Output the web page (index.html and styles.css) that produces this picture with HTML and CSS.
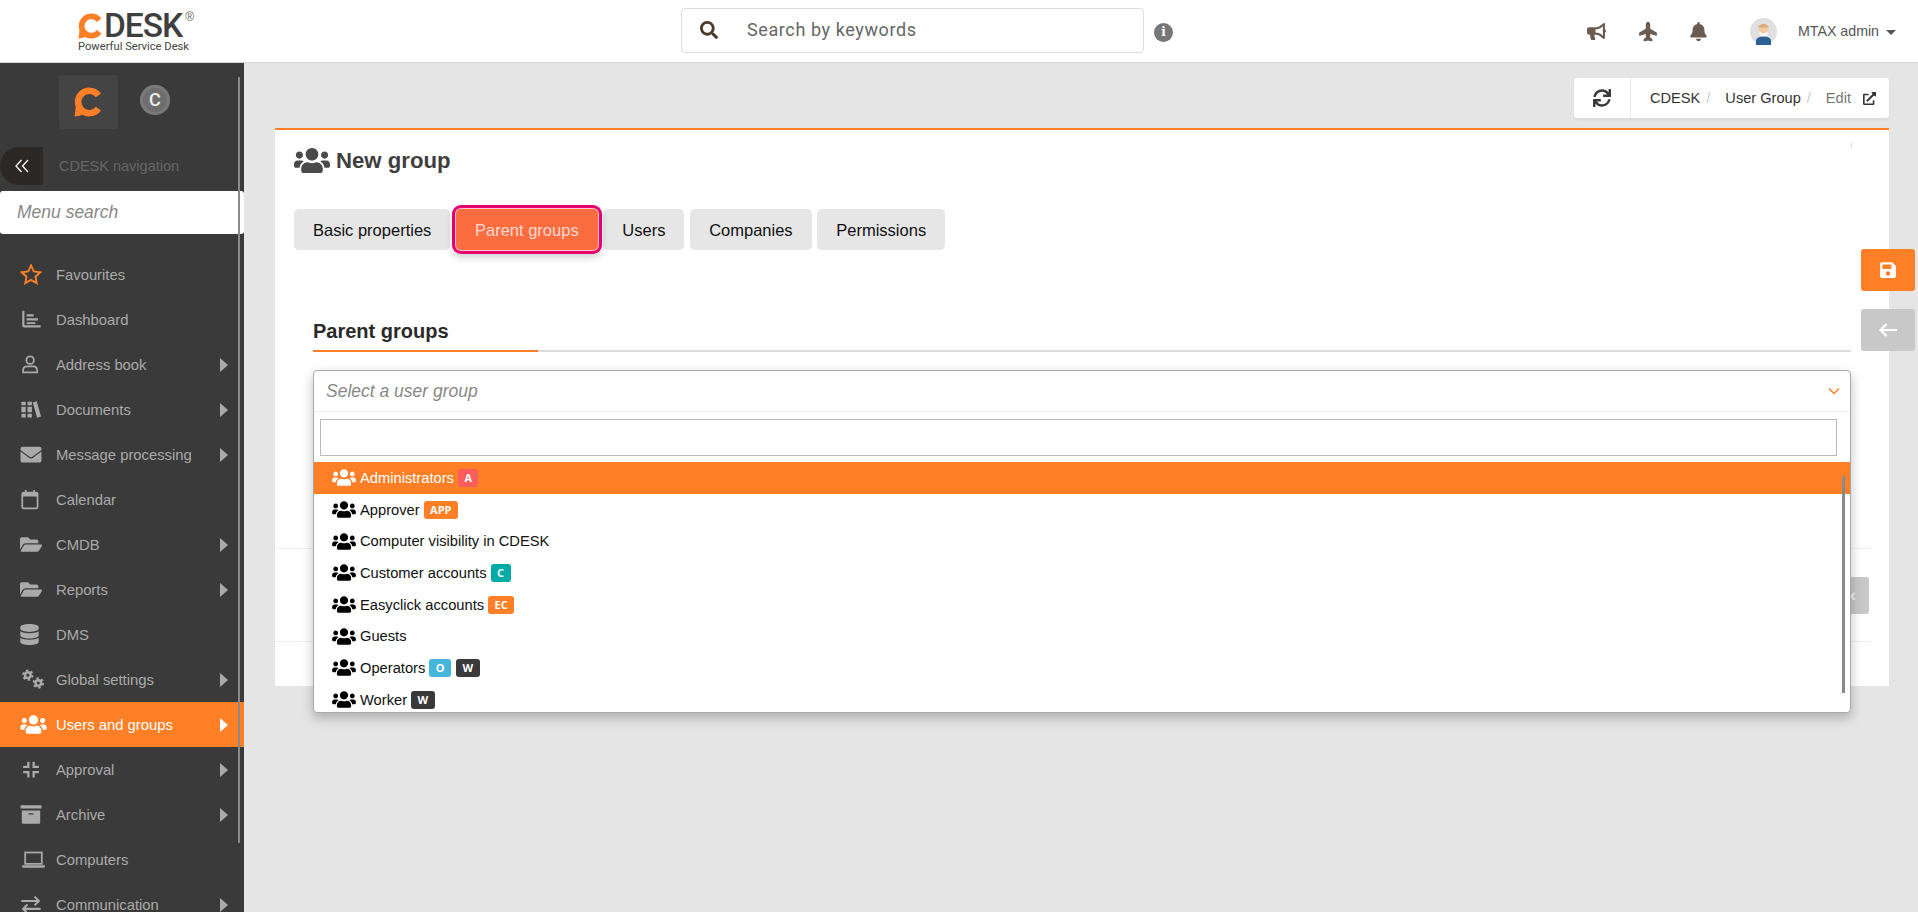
FILE: index.html
```html
<!DOCTYPE html>
<html lang="en">
<head>
  <meta charset="UTF-8" />
  <title>CDESK - New group</title>
  <link rel="stylesheet" href="styles.css">
</head>
<body>
  <svg class="sprites" width="0" height="0">
    <symbol id="i-users" viewBox="0 0 640 512"><path d="M96 224c35.3 0 64-28.7 64-64s-28.7-64-64-64-64 28.7-64 64 28.7 64 64 64zm448 0c35.3 0 64-28.7 64-64s-28.7-64-64-64-64 28.7-64 64 28.7 64 64 64zm32 32h-64c-17.6 0-33.5 7.1-45.1 18.6 40.3 22.1 68.9 62 75.1 109.4h66c17.7 0 32-14.3 32-32v-32c0-35.3-28.7-64-64-64zm-256 0c61.9 0 112-50.1 112-112S381.9 32 320 32 208 82.1 208 144s50.1 112 112 112zm76.8 32h-8.3c-20.8 10-43.9 16-68.5 16s-47.6-6-68.5-16h-8.3C179.6 288 128 339.6 128 403.2V432c0 26.5 21.5 48 48 48h288c26.5 0 48-21.5 48-48v-28.8c0-63.6-51.6-115.2-115.2-115.2zm-223.7-13.4C161.5 263.1 145.6 256 128 256H64c-35.3 0-64 28.7-64 64v32c0 17.7 14.3 32 32 32h65.9c6.3-47.4 34.9-87.3 75.2-109.4z"/></symbol>
    <symbol id="i-folder" viewBox="0 0 576 512"><path d="M572.694 292.093L500.27 416.248A63.997 63.997 0 0 1 444.989 448H45.025c-18.523 0-30.064-20.093-20.731-36.093l72.424-124.155A64 64 0 0 1 152 256h399.964c18.523 0 30.064 20.093 20.73 36.093zM152 224h328v-48c0-26.51-21.49-48-48-48H272l-64-64H48C21.49 64 0 85.49 0 112v278.046l69.077-118.418C86.214 242.25 117.989 224 152 224z"/></symbol>
    <symbol id="i-cdesk-c" viewBox="0 0 30 30"><path d="M24.4 8.4A11.2 11.2 0 1 0 24.4 21.600" fill="none" stroke="#ff7f27" stroke-width="6.500"/><path d="M0.500 29.500L1.800 20L9.500 27.500Q4 29.500 0.500 29.500z" fill="#ff7f27"/></symbol>
  </svg>

  <header class="topbar">
    <div class="logo">
      <div class="logo-main">
        <svg class="logo-c"><use href="#i-cdesk-c"/></svg>
        <span class="logo-name">DESK</span><span class="logo-reg">®</span>
      </div>
      <div class="logo-sub">Powerful Service Desk</div>
    </div>
    <div class="search">
      <svg class="search-icon" viewBox="0 0 512 512"><path d="M505 442.7L405.3 343c-4.5-4.5-10.6-7-17-7H372c27.6-35.3 44-79.7 44-128C416 93.1 322.9 0 208 0S0 93.1 0 208s93.1 208 208 208c48.3 0 92.7-16.4 128-44v16.3c0 6.4 2.5 12.5 7 17l99.7 99.7c9.4 9.4 24.6 9.4 33.9 0l28.3-28.3c9.4-9.4 9.4-24.6.1-34zM208 336c-70.7 0-128-57.2-128-128 0-70.7 57.2-128 128-128 70.7 0 128 57.2 128 128 0 70.7-57.2 128-128 128z"/></svg>
      <span>Search by keywords</span>
    </div>
    <div class="info">i</div>
    <div class="top-actions">
      <svg class="top-icon bullhorn" viewBox="0 0 576 512"><path d="M576 240c0-23.63-12.95-44.04-32-55.12V32.01C544 23.26 537.02 0 512 0c-7.12 0-14.19 2.38-19.98 7.02l-85.03 68.03C364.28 109.19 310.66 128 256 128H64c-35.35 0-64 28.65-64 64v96c0 35.35 28.65 64 64 64h33.7c-1.39 10.48-2.18 21.14-2.18 32 0 39.77 9.26 77.35 25.56 110.94 5.19 10.69 16.52 17.06 28.4 17.06h74.28c26.05 0 41.69-29.84 25.9-50.56-16.4-21.52-26.15-48.36-26.15-77.44 0-11.11 1.62-21.79 4.41-32H256c54.66 0 108.28 18.81 150.98 52.95l85.03 68.03a32.023 32.023 0 0 0 19.98 7.02c24.92 0 32-22.78 32-32V295.13C563.05 284.04 576 263.63 576 240zm-96 141.42l-33.05-26.44C392.95 311.78 325.12 288 256 288v-96c69.12 0 136.95-23.78 190.95-66.98L480 98.58v282.84z"/></svg>
      <svg class="top-icon plane" viewBox="0 0 576 512"><path d="M480 192H365.71L260.61 8.06A16.014 16.014 0 0 0 246.71 0h-65.5c-10.63 0-18.3 10.17-15.38 20.39L214.86 192H112l-43.2-57.6c-3.02-4.03-7.77-6.4-12.8-6.4H16.01C5.6 128-2.04 137.78.49 147.88L32 256 .49 364.12C-2.04 374.22 5.6 384 16.01 384H56c5.04 0 9.78-2.37 12.8-6.4L112 320h102.86l-49.03 171.6c-2.92 10.22 4.75 20.4 15.38 20.4h65.5c5.74 0 11.04-3.08 13.89-8.06L365.71 320H480c35.35 0 96-28.65 96-64s-60.65-64-96-64z"/></svg>
      <svg class="top-icon bell" viewBox="0 0 448 512"><path d="M224 512c35.32 0 63.97-28.65 63.97-64H160.03c0 35.35 28.65 64 63.97 64zm215.39-149.71c-19.32-20.76-55.47-51.99-55.47-154.29 0-77.7-54.48-139.9-127.94-155.16V32c0-17.67-14.32-32-31.98-32s-31.98 14.33-31.98 32v20.84C118.56 68.1 64.08 130.3 64.08 208c0 102.3-36.15 133.53-55.47 154.29-6 6.45-8.66 14.16-8.61 21.71.11 16.4 12.98 32 32.1 32h383.8c19.12 0 32-15.6 32.1-32 .05-7.55-2.61-15.27-8.61-21.71z"/></svg>
      <svg class="avatar" viewBox="0 0 27 27"><circle cx="13.5" cy="13.5" r="13.5" fill="#e0e0e2"/><circle cx="13.5" cy="11" r="5" fill="#f3c9a0"/><path d="M8 8.5q5.500-5 11 0l-1 1h-9z" fill="#d9a878"/><path d="M9.500 13q4 5 8 0v3l-2 2.500h-4l-2-2.500z" fill="#fff"/><path d="M6 27v-4q0-4.500 7.500-4.500t7.500 4.500v4z" fill="#2d6194"/></svg>
      <span class="user-name">MTAX admin</span>
      <span class="caret"></span>
    </div>
  </header>

  <div class="layout">
    <aside class="sidebar">
      <div class="side-scroll"></div>
      <div class="brand-row">
        <div class="brand-tile">
          <svg><use href="#i-cdesk-c"/></svg>
        </div>
        <div class="brand-alt">C</div>
      </div>
      <div class="nav-head">
        <div class="collapse">
          <svg viewBox="0 0 14 14"><path d="M6.500 1L1 7l5.500 6M13 1L7.500 7l5.500 6" fill="none" stroke="#fff" stroke-width="1.300"/></svg>
        </div>
        <span>CDESK navigation</span>
      </div>
      <div class="menu-search">Menu search</div>
      <nav class="menu">
        <a class="menu-item">
          <svg class="menu-icon" viewBox="1 1 22 22"><path d="M12 2.500l2.900 6.300 6.800.8-5 4.700 1.300 6.800-6-3.400-6 3.400 1.300-6.800-5-4.700 6.800-.8z" fill="none" stroke="#ff7f27" stroke-width="2"/></svg>
          Favourites
        </a>
        <a class="menu-item">
          <svg class="menu-icon" viewBox="0 0 24 24"><path d="M2 2v17q0 2 2 2h19v-2.500H4.500V2z"/><path d="M7 6h8v2.500H7zM7 10.500h13V13H7zM7 15h10v2H7z"/></svg>
          Dashboard
        </a>
        <a class="menu-item has-sub">
          <svg class="menu-icon" viewBox="0 0 24 24"><circle cx="11" cy="7" r="4.300" fill="none" stroke="#aaa" stroke-width="2"/><path d="M3 21v-2.500q0-4.500 4.500-4.500h7q4.500 0 4.500 4.500V21z" fill="none" stroke="#aaa" stroke-width="2"/></svg>
          Address book
        </a>
        <a class="menu-item has-sub">
          <svg class="menu-icon" viewBox="0 0 24 24"><path d="M1 3h5v18H1zM8 3h5v18H8zM14 4l4.500-1.500 5 17.500-4.500 1.500z"/><path d="M0 8h14M0 16h14" stroke="#3a3a3a" stroke-width="1.500"/></svg>
          Documents
        </a>
        <a class="menu-item has-sub">
          <svg class="menu-icon" viewBox="0 0 512 512"><path d="M502.3 190.8c3.900-3.100 9.700-.2 9.700 4.700V400c0 26.500-21.500 48-48 48H48c-26.500 0-48-21.500-48-48V195.600c0-5 5.700-7.800 9.700-4.700 22.400 17.400 52.100 39.500 154.100 113.600 21.100 15.400 56.700 47.800 92.200 47.600 35.700.3 72-32.800 92.300-47.600 102-74.100 131.600-96.300 154-113.700zM256 320c23.200.4 56.600-29.200 73.400-41.400 132.700-96.300 142.800-104.700 173.400-128.700 5.800-4.500 9.200-11.500 9.200-18.900v-19c0-26.500-21.500-48-48-48H48C21.500 64 0 85.500 0 112v19c0 7.400 3.400 14.300 9.200 18.900 30.600 23.900 40.700 32.400 173.400 128.700 16.800 12.200 50.200 41.800 73.400 41.400z"/></svg>
          Message processing
        </a>
        <a class="menu-item">
          <svg class="menu-icon" viewBox="0 0 24 24"><rect x="2" y="4" width="17.500" height="18" rx="1.500" fill="none" stroke="#aaa" stroke-width="2"/><path d="M2 4h17.500v4.500H2zM5 1h2v4H5zM14.500 1h2v4h-2z"/></svg>
          Calendar
        </a>
        <a class="menu-item has-sub">
          <svg class="menu-icon"><use href="#i-folder"/></svg>
          CMDB
        </a>
        <a class="menu-item has-sub">
          <svg class="menu-icon"><use href="#i-folder"/></svg>
          Reports
        </a>
        <a class="menu-item">
          <svg class="menu-icon db" viewBox="0 0 448 512"><path d="M448 73.143v45.714C448 159.143 347.667 192 224 192S0 159.143 0 118.857V73.143C0 32.857 100.333 0 224 0s224 32.857 224 73.143zM448 176v102.857C448 319.143 347.667 352 224 352S0 319.143 0 278.857V176c48.125 33.143 136.208 48.572 224 48.572S399.874 209.143 448 176zm0 160v102.857C448 479.143 347.667 512 224 512S0 479.143 0 438.857V336c48.125 33.143 136.208 48.572 224 48.572S399.874 369.143 448 336z"/></svg>
          DMS
        </a>
        <a class="menu-item has-sub">
          <svg class="menu-icon cogs" viewBox="0 0 27 24"><g fill="none" stroke="#aaa"><circle cx="7" cy="7" r="3.200" stroke-width="2.800"/><circle cx="7" cy="7" r="5.400" stroke-width="2.200" stroke-dasharray="2.700 2.950"/><circle cx="19" cy="16" r="3.200" stroke-width="2.800"/><circle cx="19" cy="16" r="5.400" stroke-width="2.200" stroke-dasharray="2.700 2.950"/></g></svg>
          Global settings
        </a>
        <a class="menu-item has-sub active">
          <svg class="menu-icon users"><use href="#i-users"/></svg>
          Users and groups
        </a>
        <a class="menu-item has-sub">
          <svg class="menu-icon" viewBox="0 0 24 24"><path d="M9 3v6H3M15 3v6h6M9 21v-6H3M15 21v-6h6" fill="none" stroke="#aaa" stroke-width="2.600"/></svg>
          Approval
        </a>
        <a class="menu-item has-sub">
          <svg class="menu-icon" viewBox="0 0 512 512"><path d="M32 448c0 17.700 14.300 32 32 32h384c17.700 0 32-14.300 32-32V160H32v288zm160-212c0-6.600 5.400-12 12-12h104c6.600 0 12 5.400 12 12v8c0 6.600-5.400 12-12 12H204c-6.600 0-12-5.400-12-12v-8zM496 32H16C7.200 32 0 39.200 0 48v48c0 8.800 7.200 16 16 16h480c8.800 0 16-7.200 16-16V48c0-8.800-7.200-16-16-16z"/></svg>
          Archive
        </a>
        <a class="menu-item">
          <svg class="menu-icon wide" viewBox="0 0 26 24"><rect x="3.500" y="4" width="19" height="13" fill="none" stroke="#aaa" stroke-width="2"/><path d="M0 18.500h26V20q0 1.500-1.500 1.500h-23Q0 21.500 0 20z"/></svg>
          Computers
        </a>
        <a class="menu-item has-sub">
          <svg class="menu-icon" viewBox="0 0 24 24"><path d="M1 8h20M16 3l5 5-5 5M23 17H3M8 12l-5 5 5 5" fill="none" stroke="#aaa" stroke-width="2.400"/></svg>
          Communication
        </a>
      </nav>
    </aside>

    <main class="content">
      <div class="crumbs">
        <div class="crumb-refresh">
          <svg viewBox="0 0 512 512"><path d="M440.65 12.57l4 82.77A247.16 247.16 0 0 0 255.83 8C134.73 8 33.91 94.92 12.29 209.82A12 12 0 0 0 24.09 224h49.05a12 12 0 0 0 11.67-9.26 175.91 175.91 0 0 1 317-56.94l-101.46-4.86a12 12 0 0 0-12.57 12v47.41a12 12 0 0 0 12 12H500a12 12 0 0 0 12-12V12a12 12 0 0 0-12-12h-47.37a12 12 0 0 0-11.98 12.57zM255.83 432a175.61 175.61 0 0 1-146-77.8l101.8 4.87a12 12 0 0 0 12.57-12v-47.4a12 12 0 0 0-12-12H12a12 12 0 0 0-12 12V500a12 12 0 0 0 12 12h47.35a12 12 0 0 0 12-12.6l-4.15-82.57A247.17 247.17 0 0 0 255.83 504c121.11 0 221.93-86.92 243.55-201.82a12 12 0 0 0-11.8-14.18h-49.05a12 12 0 0 0-11.67 9.26A175.86 175.86 0 0 1 255.83 432z"/></svg>
        </div>
        <div class="crumb-path">
          <span>CDESK</span><i>/</i>
          <span>User Group</span><i>/</i>
          <span class="crumb-now">Edit</span>
          <svg class="crumb-link" viewBox="0 0 512 512"><path d="M432,320H400a16,16,0,0,0-16,16V448H64V128H208a16,16,0,0,0,16-16V80a16,16,0,0,0-16-16H48A48,48,0,0,0,0,112V464a48,48,0,0,0,48,48H400a48,48,0,0,0,48-48V336A16,16,0,0,0,432,320ZM488,0h-128c-21.370,0-32.050,25.910-17,41l35.730,35.730L135,320.370a24,24,0,0,0,0,34L157.670,377a24,24,0,0,0,34,0L435.280,133.320,471,169c15,15,41,4.500,41-17V24A24,24,0,0,0,488,0Z"/></svg>
        </div>
      </div>

      <section class="card">
        <span class="card-tick"></span>
        <h1 class="card-title">
          <svg class="title-icon"><use href="#i-users"/></svg>
          New group
        </h1>
        <div class="tabs">
          <button class="tab">Basic properties</button>
          <button class="tab tab-active">Parent groups</button>
          <button class="tab">Users</button>
          <button class="tab">Companies</button>
          <button class="tab">Permissions</button>
        </div>

        <div class="panel">
          <h2 class="panel-title">Parent groups</h2>
          <div class="select">
            <div class="select-box">
              <div class="select-head">
                <span>Select a user group</span>
                <svg viewBox="0 0 12 8"><path d="M1 1.500l5 5 5-5" fill="none" stroke="#ff7f27" stroke-width="1.500"/></svg>
              </div>
              <div class="select-filter"><div class="filter-input"></div></div>
              <ul class="options">
                <li class="option selected"><svg><use href="#i-users"/></svg>Administrators <b class="badge red">A</b></li>
                <li class="option"><svg><use href="#i-users"/></svg>Approver <b class="badge orange">APP</b></li>
                <li class="option"><svg><use href="#i-users"/></svg>Computer visibility in CDESK</li>
                <li class="option"><svg><use href="#i-users"/></svg>Customer accounts <b class="badge teal">C</b></li>
                <li class="option"><svg><use href="#i-users"/></svg>Easyclick accounts <b class="badge orange">EC</b></li>
                <li class="option"><svg><use href="#i-users"/></svg>Guests</li>
                <li class="option"><svg><use href="#i-users"/></svg>Operators <b class="badge blue">O</b> <b class="badge dark">W</b></li>
                <li class="option"><svg><use href="#i-users"/></svg>Worker <b class="badge dark">W</b></li>
              </ul>
              <div class="options-scroll"></div>
            </div>
          </div>
        </div>

        <div class="under-row">
          <div class="under-btn">‹</div>
        </div>
      </section>

      <button class="float-btn save">
        <svg viewBox="0 0 448 512"><path d="M433.941 129.941l-83.882-83.882A48 48 0 0 0 316.118 32H48C21.490 32 0 53.490 0 80v352c0 26.510 21.490 48 48 48h352c26.510 0 48-21.490 48-48V163.882a48 48 0 0 0-14.059-33.941zM224 416c-35.346 0-64-28.654-64-64 0-35.346 28.654-64 64-64s64 28.654 64 64c0 35.346-28.654 64-64 64zm96-304.520V212c0 6.627-5.373 12-12 12H76c-6.627 0-12-5.373-12-12V108c0-6.627 5.373-12 12-12h228.520c3.183 0 6.235 1.264 8.485 3.515l3.480 3.480A11.996 11.996 0 0 1 320 111.480z"/></svg>
      </button>
      <button class="float-btn back">
        <svg viewBox="0 0 20 16"><path d="M19 8H3M8.500 2L2.500 8l6 6" fill="none" stroke="#fff" stroke-width="2.200"/></svg>
      </button>
    </main>
  </div>
</body>
</html>
```

FILE: styles.css
```css
/* General */
* {
  box-sizing: border-box;
}
html, body {
  height: 100%;
}
body {
  margin: 0;
  background-color: #e5e5e5;
  color: #3a3a3a;
  font-family: 'Liberation Sans', Arial, sans-serif;
  overflow: hidden;
}
.sprites {
  position: absolute;
}

/* Top bar */
.topbar {
  display: flex;
  align-items: center;
  height: 63px;
  background-color: #fff;
  border-bottom: 1px solid #d8d8d8;
}
.logo {
  align-self: flex-start;
  width: 681px;
  padding: 13px 0 0 78px;
}
.logo-main {
  display: flex;
  align-items: flex-start;
  height: 27px;
}
.logo-c {
  width: 26px;
  height: 26px;
}
.logo-name {
  font-family: 'Roboto', sans-serif;
  font-size: 33.5px;
  font-weight: 500;
  line-height: 25px;
  letter-spacing: -1px;
  color: #3f3f3f;
}
.logo-reg {
  margin-left: 3px;
  font-size: 12px;
  line-height: 9px;
  color: #666;
}
.logo-sub {
  font-family: 'Roboto', sans-serif;
  font-size: 11.2px;
  line-height: 14px;
  color: #444;
}
.search {
  display: flex;
  align-items: center;
  width: 463px;
  height: 45px;
  margin-top: -1px;
  padding: 0 0 2px 18px;
  border: 1px solid #ddd;
  border-radius: 4px;
  font-family: 'Roboto', sans-serif;
  font-size: 18px;
  letter-spacing: 0.6px;
  color: #666;
}
.search-icon {
  width: 18px;
  height: 18px;
  fill: #4b3b2b;
  margin-right: 29px;
}
.info {
  width: 19px;
  height: 19px;
  margin: 2px 0 0 10px;
  border-radius: 50%;
  background-color: #777;
  color: #fff;
  font-family: 'DejaVu Serif', serif;
  font-size: 12px;
  font-weight: bold;
  line-height: 19px;
  text-align: center;
}
.top-actions {
  display: flex;
  align-items: center;
  margin-left: auto;
  padding-right: 22px;
}
.top-icon {
  height: 19px;
  fill: #6b5c50;
}
.bullhorn {
  width: 19px;
}
.plane {
  width: 20px;
  margin-left: 32px;
  transform: rotate(-90deg);
}
.bell {
  width: 17px;
  margin-left: 32px;
}
.avatar {
  width: 27px;
  height: 27px;
  margin-left: 43.5px;
}
.user-name {
  margin-left: 21px;
  font-size: 14.2px;
  color: #555;
}
.caret {
  width: 0;
  height: 0;
  margin: 3px 0 0 7px;
  border-left: 5px solid transparent;
  border-right: 5px solid transparent;
  border-top: 5px solid #555;
}

/* Page layout */
.layout {
  display: flex;
  height: calc(100% - 63px);
}

/* Sidebar */
.sidebar {
  position: relative;
  flex: none;
  width: 244px;
  overflow: hidden;
  padding-top: 12px;
  background-color: #3a3a3a;
}
.side-scroll {
  position: absolute;
  top: 14px;
  left: 238px;
  width: 2px;
  height: 766px;
  background-color: #8a8a8a;
  z-index: 2;
}
.brand-row {
  display: flex;
  align-items: flex-start;
  padding-left: 59px;
}
.brand-tile {
  display: flex;
  align-items: center;
  justify-content: center;
  width: 59px;
  height: 54px;
  border-radius: 3px;
  background-color: #444;
}
.brand-tile svg {
  width: 30px;
  height: 30px;
  margin-top: -1px;
}
.brand-alt {
  width: 30px;
  height: 30px;
  margin: 10px 0 0 22px;
  border-radius: 50%;
  background-color: #6e6e6e;
  box-shadow: inset 0 0 0 3px #7a7a7a;
  color: #eee;
  font-family: 'Roboto', sans-serif;
  font-size: 18px;
  font-weight: 500;
  line-height: 30px;
  text-align: center;
}
.nav-head {
  display: flex;
  align-items: center;
  height: 38px;
  margin-top: 18px;
  font-size: 14.5px;
  color: #666;
}
.collapse {
  display: flex;
  align-items: center;
  justify-content: center;
  width: 43px;
  height: 38px;
  margin-right: 16px;
  border-radius: 19px 0 0 19px;
  background-color: #2b2825;
}
.collapse svg {
  width: 14px;
  height: 14px;
}
.menu-search {
  height: 43px;
  margin-top: 6px;
  padding-left: 17px;
  border-radius: 3px;
  background-color: #fff;
  font-size: 17.5px;
  font-style: italic;
  line-height: 43px;
  color: #888;
}
.menu {
  padding-top: 18px;
}
.menu-item {
  position: relative;
  display: flex;
  align-items: center;
  height: 45px;
  padding-left: 20px;
  font-size: 14.8px;
  color: #aaa;
}
.menu-icon {
  flex: none;
  width: 22px;
  height: 21px;
  margin-right: 14px;
  fill: #aaa;
}
.menu-icon.db {
  width: 19px;
  margin-right: 17px;
}
.menu-icon.cogs,
.menu-icon.users,
.menu-icon.wide {
  width: 27px;
  margin-right: 9px;
}
.has-sub::after {
  content: "";
  position: absolute;
  top: 16px;
  left: 220px;
  border-top: 7px solid transparent;
  border-bottom: 7px solid transparent;
  border-left: 8px solid #aaa;
}
.menu-item.active {
  background-color: #ff7f27;
  color: #fff;
}
.menu-item.active .menu-icon {
  fill: #fff;
}
.menu-item.active::after {
  border-left-color: #fff;
}

/* Content */
.content {
  position: relative;
  flex: 1;
  min-width: 0;
  padding: 15px 29px 0 31px;
}
.crumbs {
  display: flex;
  width: 315px;
  height: 40px;
  margin: 0 0 10px auto;
  border-radius: 3px;
  background-color: #fff;
  box-shadow: 0 2px 3px rgba(0, 0, 0, 0.06);
}
.crumb-refresh {
  display: flex;
  align-items: center;
  justify-content: center;
  width: 57px;
  border-right: 1px solid #e8e8e8;
}
.crumb-refresh svg {
  width: 18px;
  height: 18px;
  fill: #3a3a3a;
}
.crumb-path {
  display: flex;
  align-items: center;
  padding-left: 19px;
  font-size: 14.6px;
  color: #333;
}
.crumb-path i {
  margin: 0 15px 0 6px;
  font-style: normal;
  color: #ccc;
}
.crumb-now {
  color: #777;
}
.crumb-link {
  width: 13px;
  height: 13px;
  margin-left: 12px;
  fill: #333;
}

.card {
  position: relative;
  height: 558px;
  padding: 0 37px 0 19px;
  border-top: 2px solid #ff7f27;
  background-color: #fff;
}
.card-tick {
  position: absolute;
  top: 13px;
  right: 37px;
  width: 1px;
  height: 5px;
  background-color: #ddd;
}
.card-title {
  display: flex;
  align-items: center;
  height: 61px;
  margin: 0;
  font-size: 22.2px;
  font-weight: bold;
  color: #3f3f3f;
}
.title-icon {
  width: 36px;
  height: 29px;
  margin-right: 6px;
  fill: #4a4a4a;
}
.tabs {
  display: flex;
  gap: 5.7px;
  margin-top: 18px;
}
.tab {
  height: 41px;
  padding: 1px 19px 0;
  border: none;
  border-radius: 5px;
  background-color: #e6e6e6;
  color: #111;
  font-family: inherit;
  font-size: 16.5px;
}
.tab-active {
  position: relative;
  background-color: #fb6d3f;
  color: #ffd9d0;
  box-shadow: 0 0 0 1px #ffc0d8, 0 0 0 4px #e6006e, 0 4px 8px 3px rgba(0, 0, 0, 0.2);
}

.panel {
  padding: 71px 1px 0 19px;
}
.panel-title {
  position: relative;
  height: 31px;
  margin: 0;
  border-bottom: 2px solid #ddd;
  font-size: 20px;
  line-height: 20px;
  color: #2a2a2a;
}
.panel-title::after {
  content: "";
  position: absolute;
  left: 0;
  bottom: -2px;
  width: 225px;
  height: 2px;
  background-color: #ff7f27;
}
.select {
  position: relative;
  height: 42px;
  margin-top: 18px;
}
.select-box {
  position: absolute;
  top: 0;
  left: 0;
  right: 0;
  height: 343px;
  border: 1px solid #aaa;
  border-radius: 4px;
  background-color: #fff;
  box-shadow: 0 5px 12px rgba(0, 0, 0, 0.25);
  overflow: hidden;
  z-index: 3;
}
.select-head {
  display: flex;
  align-items: center;
  justify-content: space-between;
  height: 41px;
  padding: 0 10px 0 12px;
  border-bottom: 1px solid #eee;
  font-size: 17.5px;
  font-style: italic;
  color: #888;
}
.select-head svg {
  width: 12px;
  height: 8px;
}
.select-filter {
  padding: 7px 0 6px 6px;
}
.filter-input {
  width: 1517px;
  height: 37px;
  border: 1px solid #bbb;
}
.options {
  margin: 0;
  padding: 0;
  list-style: none;
}
.option {
  display: flex;
  align-items: center;
  gap: 4px;
  height: 31.7px;
  padding-left: 18px;
  font-size: 14.7px;
  color: #111;
}
.option svg {
  width: 24px;
  height: 19px;
  fill: #000;
}
.option.selected {
  background-color: #ff7f27;
  color: #fff;
}
.option.selected svg {
  fill: #fff;
}
.badge {
  height: 18px;
  padding: 0 6.5px;
  border-radius: 3px;
  color: #fff;
  font-family: 'Open Sans', sans-serif;
  font-size: 11px;
  font-weight: 700;
  line-height: 18px;
}
.badge + .badge {
  margin-left: 1px;
}
.badge.red { background-color: #fb5d5d; }
.badge.orange { background-color: #ff7f27; }
.badge.teal { background-color: #00aaa6; }
.badge.blue { background-color: #46b5d9; }
.badge.dark { background-color: #3a3a3a; }
.options-scroll {
  position: absolute;
  top: 105px;
  right: 5px;
  width: 3px;
  height: 217px;
  background-color: #8a8a8a;
}

.under-row {
  display: flex;
  justify-content: flex-end;
  align-items: center;
  height: 94px;
  margin: 136px -18px 0 -19px;
  border-top: 1px solid #eee;
  border-bottom: 1px solid #eee;
}
.under-btn {
  width: 36px;
  height: 37px;
  margin-right: 1px;
  padding-left: 17px;
  border-radius: 3px;
  background-color: #c8c8c8;
  color: #fff;
  font-size: 18px;
  line-height: 37px;
}

.float-btn {
  position: absolute;
  left: 1617px;
  display: flex;
  align-items: center;
  justify-content: center;
  width: 54px;
  height: 42px;
  padding: 0;
  border: none;
  border-radius: 3px;
}
.float-btn.save {
  top: 186px;
  background-color: #ff7f27;
}
.float-btn.save svg {
  width: 16px;
  height: 18px;
  fill: #fff;
}
.float-btn.back {
  top: 246px;
  background-color: #c8c8c8;
}
.float-btn.back svg {
  width: 20px;
  height: 16px;
}
```
